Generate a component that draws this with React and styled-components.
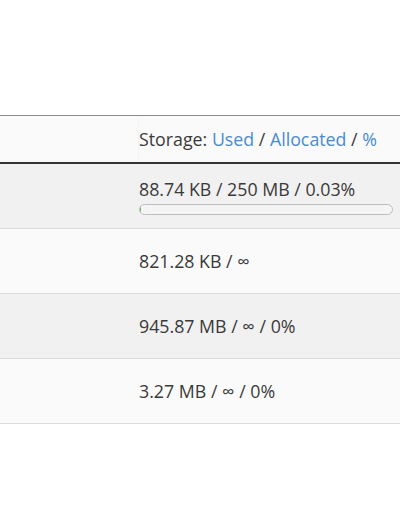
import styled, { createGlobalStyle } from "styled-components";

const GlobalStyle = createGlobalStyle`
  body {
    margin: 0;
    background: #ffffff;
    font-family: "Open Sans", "Liberation Sans", sans-serif;
    color: #3a3a3a;
  }
`;

const Page = styled.div`
  padding-top: 115px;
`;

const Table = styled.div`
  display: grid;
  grid-template-columns: 139px 1fr;
  border-top: 1px solid #8a8a8a;
`;

const Row = styled.div`
  display: contents;
`;

const HeaderCell = styled.div`
  height: 46px;
  display: flex;
  align-items: center;
  background: #fafafa;
  border-bottom: 2px solid #333333;
  box-shadow: 0 2px 2px rgba(0, 0, 0, 0.08);
  font-size: 17.8px;
  line-height: 22px;
  white-space: nowrap;
`;

const Link = styled.span`
  color: #4a8bd0;
`;

const Cell = styled.div`
  height: 64px;
  display: flex;
  flex-direction: column;
  justify-content: center;
  background: ${(p) => (p.$odd ? "#f1f1f1" : "#fafafa")};
  border-bottom: 1px solid #dcdcdc;
  font-size: 17.8px;
  line-height: 22px;
  padding-right: 7px;
  white-space: nowrap;
`;

const Bar = styled.div`
  margin-top: 4px;
  height: 11px;
  border: 1px solid #bdbdbd;
  border-radius: 6px;
  background: #f4f4f4;
  overflow: hidden;
  box-sizing: border-box;
`;

const Fill = styled.div`
  height: 100%;
  min-width: 1px;
  background: #5cb85c;
`;

const rows = [
  { text: "88.74 KB / 250 MB / 0.03%", pct: 0.03 },
  { text: "821.28 KB / ∞" },
  { text: "945.87 MB / ∞ / 0%" },
  { text: "3.27 MB / ∞ / 0%" },
];

const App = () => (
  <Page>
    <GlobalStyle />
    <Table>
      <Row>
        <HeaderCell />
        <HeaderCell>
          Storage:&nbsp;<Link>Used</Link>&nbsp;/&nbsp;<Link>Allocated</Link>
          &nbsp;/&nbsp;<Link>%</Link>
        </HeaderCell>
      </Row>
      {rows.map((row, i) => (
        <Row key={i}>
          <Cell $odd={i % 2 === 0} />
          <Cell $odd={i % 2 === 0}>
            <div>{row.text}</div>
            {row.pct !== undefined && (
              <Bar>
                <Fill style={{ width: `${row.pct}%` }} />
              </Bar>
            )}
          </Cell>
        </Row>
      ))}
    </Table>
  </Page>
);

export default App;
